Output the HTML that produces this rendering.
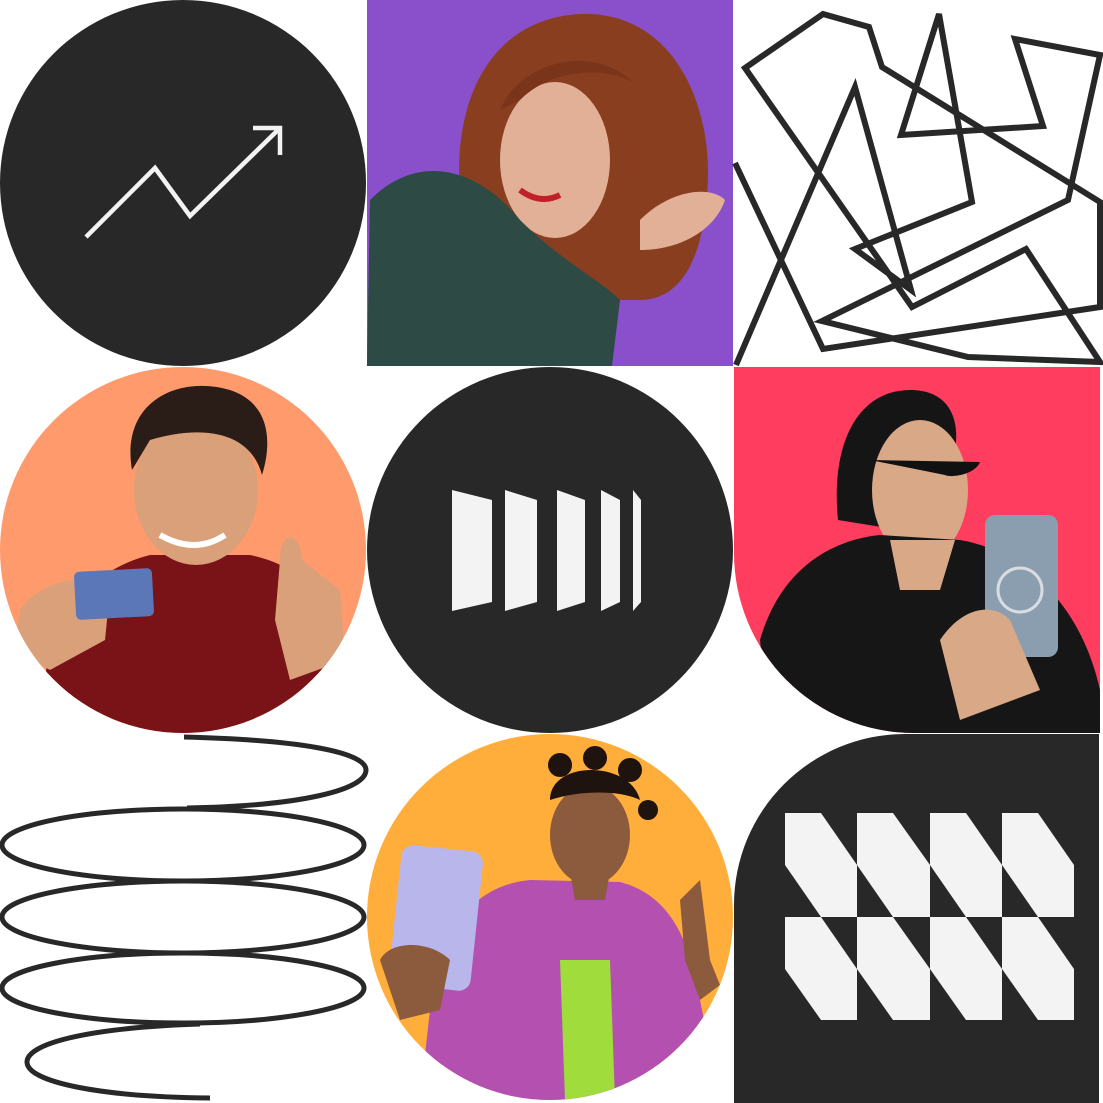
<!DOCTYPE html>
<html><head><meta charset="utf-8"><style>
html,body{margin:0;padding:0;background:#fff;width:1103px;height:1103px;overflow:hidden}
svg{display:block}
</style></head><body>
<svg width="1103" height="1103" viewBox="0 0 1103 1103" xmlns="http://www.w3.org/2000/svg">
<defs>
<clipPath id="c1"><rect x="367" y="0" width="366" height="366"/></clipPath>
<clipPath id="c2"><circle cx="183" cy="550" r="183"/></clipPath>
<clipPath id="c3"><path d="M734,367 H1100 V733 H914 A180,180 0 0 1 734,553 Z"/></clipPath>
<clipPath id="c4"><circle cx="550" cy="917" r="183"/></clipPath>
</defs>

<circle cx="183" cy="183" r="183" fill="#282828"/>
<path d="M86,237 L155,168 L190,216 L280,128 M253,128 H280 V155" fill="none" stroke="#f3f3f3" stroke-width="4.5"/>

<rect x="367" y="0" width="366" height="366" fill="#8a50cc"/>
<g clip-path="url(#c1)">
<path d="M470,250 C440,140 470,20 580,14 C680,10 720,120 705,210 C700,260 680,300 640,300 L540,300 Z" fill="#8a3e20"/>
<ellipse cx="555" cy="160" rx="55" ry="78" fill="#e2b096"/>
<path d="M500,110 C520,60 600,40 640,90 C630,70 560,60 520,100 Z" fill="#7a3419"/>
<path d="M640,220 C670,190 710,185 725,200 C715,230 680,250 640,250 Z" fill="#e2b096"/>
<path d="M370,200 C420,150 480,170 520,220 C560,260 600,280 620,300 L612,366 H367 Z" fill="#2e4a44"/>
<path d="M520,190 Q540,205 560,195" stroke="#c0202a" stroke-width="6" fill="none"/>
</g>

<path d="M735,163 L823,349 L1100,307 L1100,202 L882,67 L869,27 L823,14 L745,68 L912,307 L1026,249 L1100,362 L968,357 L822,321 L1068,200 L1100,55 L1015,39 L1043,126 L901,135 L939,14 L972,202 L855,249 L911,290 L855,87 L736,365" fill="none" stroke="#282828" stroke-width="6" stroke-linejoin="miter"/>

<circle cx="183" cy="550" r="183" fill="#ff9a6c"/>
<g clip-path="url(#c2)">
<path d="M40,733 C40,620 90,570 150,555 L250,555 C320,570 350,620 350,733 Z" fill="#7a1318"/>
<ellipse cx="196" cy="490" rx="62" ry="75" fill="#d9a07a"/>
<path d="M132,470 C120,400 180,375 230,390 C275,405 270,450 262,475 C250,430 200,425 150,440 Z" fill="#2a1d18"/>
<path d="M160,535 Q195,555 225,535" stroke="#fff" stroke-width="6" fill="none"/>
<path d="M280,560 C280,530 300,530 302,560 L340,590 L345,660 L290,680 L275,620 Z" fill="#d9a07a"/>
<path d="M20,610 C40,580 90,570 110,590 L105,640 L50,670 L15,650 Z" fill="#d9a07a"/>
<rect x="75" y="570" width="78" height="48" rx="5" fill="#5b77b8" transform="rotate(-3 114 594)"/>
</g>

<circle cx="550" cy="550" r="183" fill="#282828"/>
<g fill="#f3f3f3">
<path d="M452,490 L492,500 L492,602 L452,611 Z"/>
<path d="M505,490 L537,500 L537,602 L505,611 Z"/>
<path d="M557,490 L585,500 L585,602 L557,611 Z"/>
<path d="M601,490 L620,500 L620,602 L601,611 Z"/>
<path d="M633,490 L641,500 L641,602 L633,611 Z"/>
</g>

<path d="M734,367 H1100 V733 H914 A180,180 0 0 1 734,553 Z" fill="#ff3d5e"/>
<g clip-path="url(#c3)">
<path d="M838,520 C830,440 860,390 910,390 C950,390 960,420 955,450 L900,530 Z" fill="#151515"/>
<ellipse cx="920" cy="490" rx="48" ry="70" fill="#d8a887"/>
<path d="M760,640 C780,570 830,540 880,535 L960,540 C1020,550 1080,600 1100,690 L1100,733 H770 Z" fill="#161616"/>
<path d="M890,540 L955,540 L940,590 L900,590 Z" fill="#d8a887"/>
<path d="M870,460 L980,462 C975,475 950,478 945,475 Z" fill="#111"/>
<rect x="985" y="515" width="73" height="142" rx="10" fill="#8b9eb0"/>
<circle cx="1020" cy="590" r="22" fill="none" stroke="#d8dde2" stroke-width="3"/>
<path d="M940,640 C960,610 990,600 1010,620 L1040,690 L960,720 Z" fill="#d8a887"/>
</g>

<g fill="none" stroke="#282828" stroke-width="5">
<path d="M184,737 C300,740 366,752 366,770 C366,790 300,806 187,808"/>
<ellipse cx="183" cy="845" rx="181" ry="36"/>
<ellipse cx="183" cy="917" rx="181" ry="36"/>
<ellipse cx="183" cy="988" rx="181" ry="35"/>
<path d="M200,1024 C80,1028 27,1045 27,1062 C27,1082 100,1097 210,1098"/>
</g>

<circle cx="550" cy="917" r="183" fill="#ffad3b"/>
<g clip-path="url(#c4)">
<path d="M430,1010 C440,920 480,885 530,880 L620,882 C670,895 690,940 700,1000 L720,1100 H420 Z" fill="#b350b0"/>
<path d="M560,960 L610,960 L615,1100 L565,1100 Z" fill="#9fdc3c"/>
<ellipse cx="590" cy="835" rx="40" ry="50" fill="#8c5a3c"/>
<path d="M550,800 C550,760 630,760 640,800 C620,790 580,790 550,800 Z" fill="#1e130e"/>
<circle cx="560" cy="765" r="12" fill="#1e130e"/><circle cx="595" cy="758" r="12" fill="#1e130e"/><circle cx="630" cy="770" r="12" fill="#1e130e"/><circle cx="648" cy="810" r="10" fill="#1e130e"/>
<path d="M570,872 L610,872 L605,900 L575,900 Z" fill="#8c5a3c"/>
<rect x="395" y="848" width="82" height="140" rx="12" fill="#b8b6ea" transform="rotate(6 436 918)"/>
<path d="M380,960 C390,940 430,940 450,960 L440,1010 L400,1020 Z" fill="#8c5a3c"/>
<path d="M680,900 L700,880 L710,960 L720,985 L700,1000 L685,960 Z" fill="#8c5a3c"/>
</g>

<path d="M734,1103 V905 A171,171 0 0 1 905,734 H1099 V1103 Z" fill="#282828"/>
<g fill="#f3f3f3">
<path d="M785,813 H821 L857,865 V917 H821 L785,865 Z"/>
<path d="M857,813 H893 L930,865 V917 H893 L857,865 Z"/>
<path d="M930,813 H966 L1002,865 V917 H966 L930,865 Z"/>
<path d="M1002,813 H1038 L1074,865 V917 H1038 L1002,865 Z"/>
<path d="M785,917 H821 L857,969 V1020 H821 L785,969 Z"/>
<path d="M857,917 H893 L930,969 V1020 H893 L857,969 Z"/>
<path d="M930,917 H966 L1002,969 V1020 H966 L930,969 Z"/>
<path d="M1002,917 H1038 L1074,969 V1020 H1038 L1002,969 Z"/>
</g>
</svg>
</body></html>
